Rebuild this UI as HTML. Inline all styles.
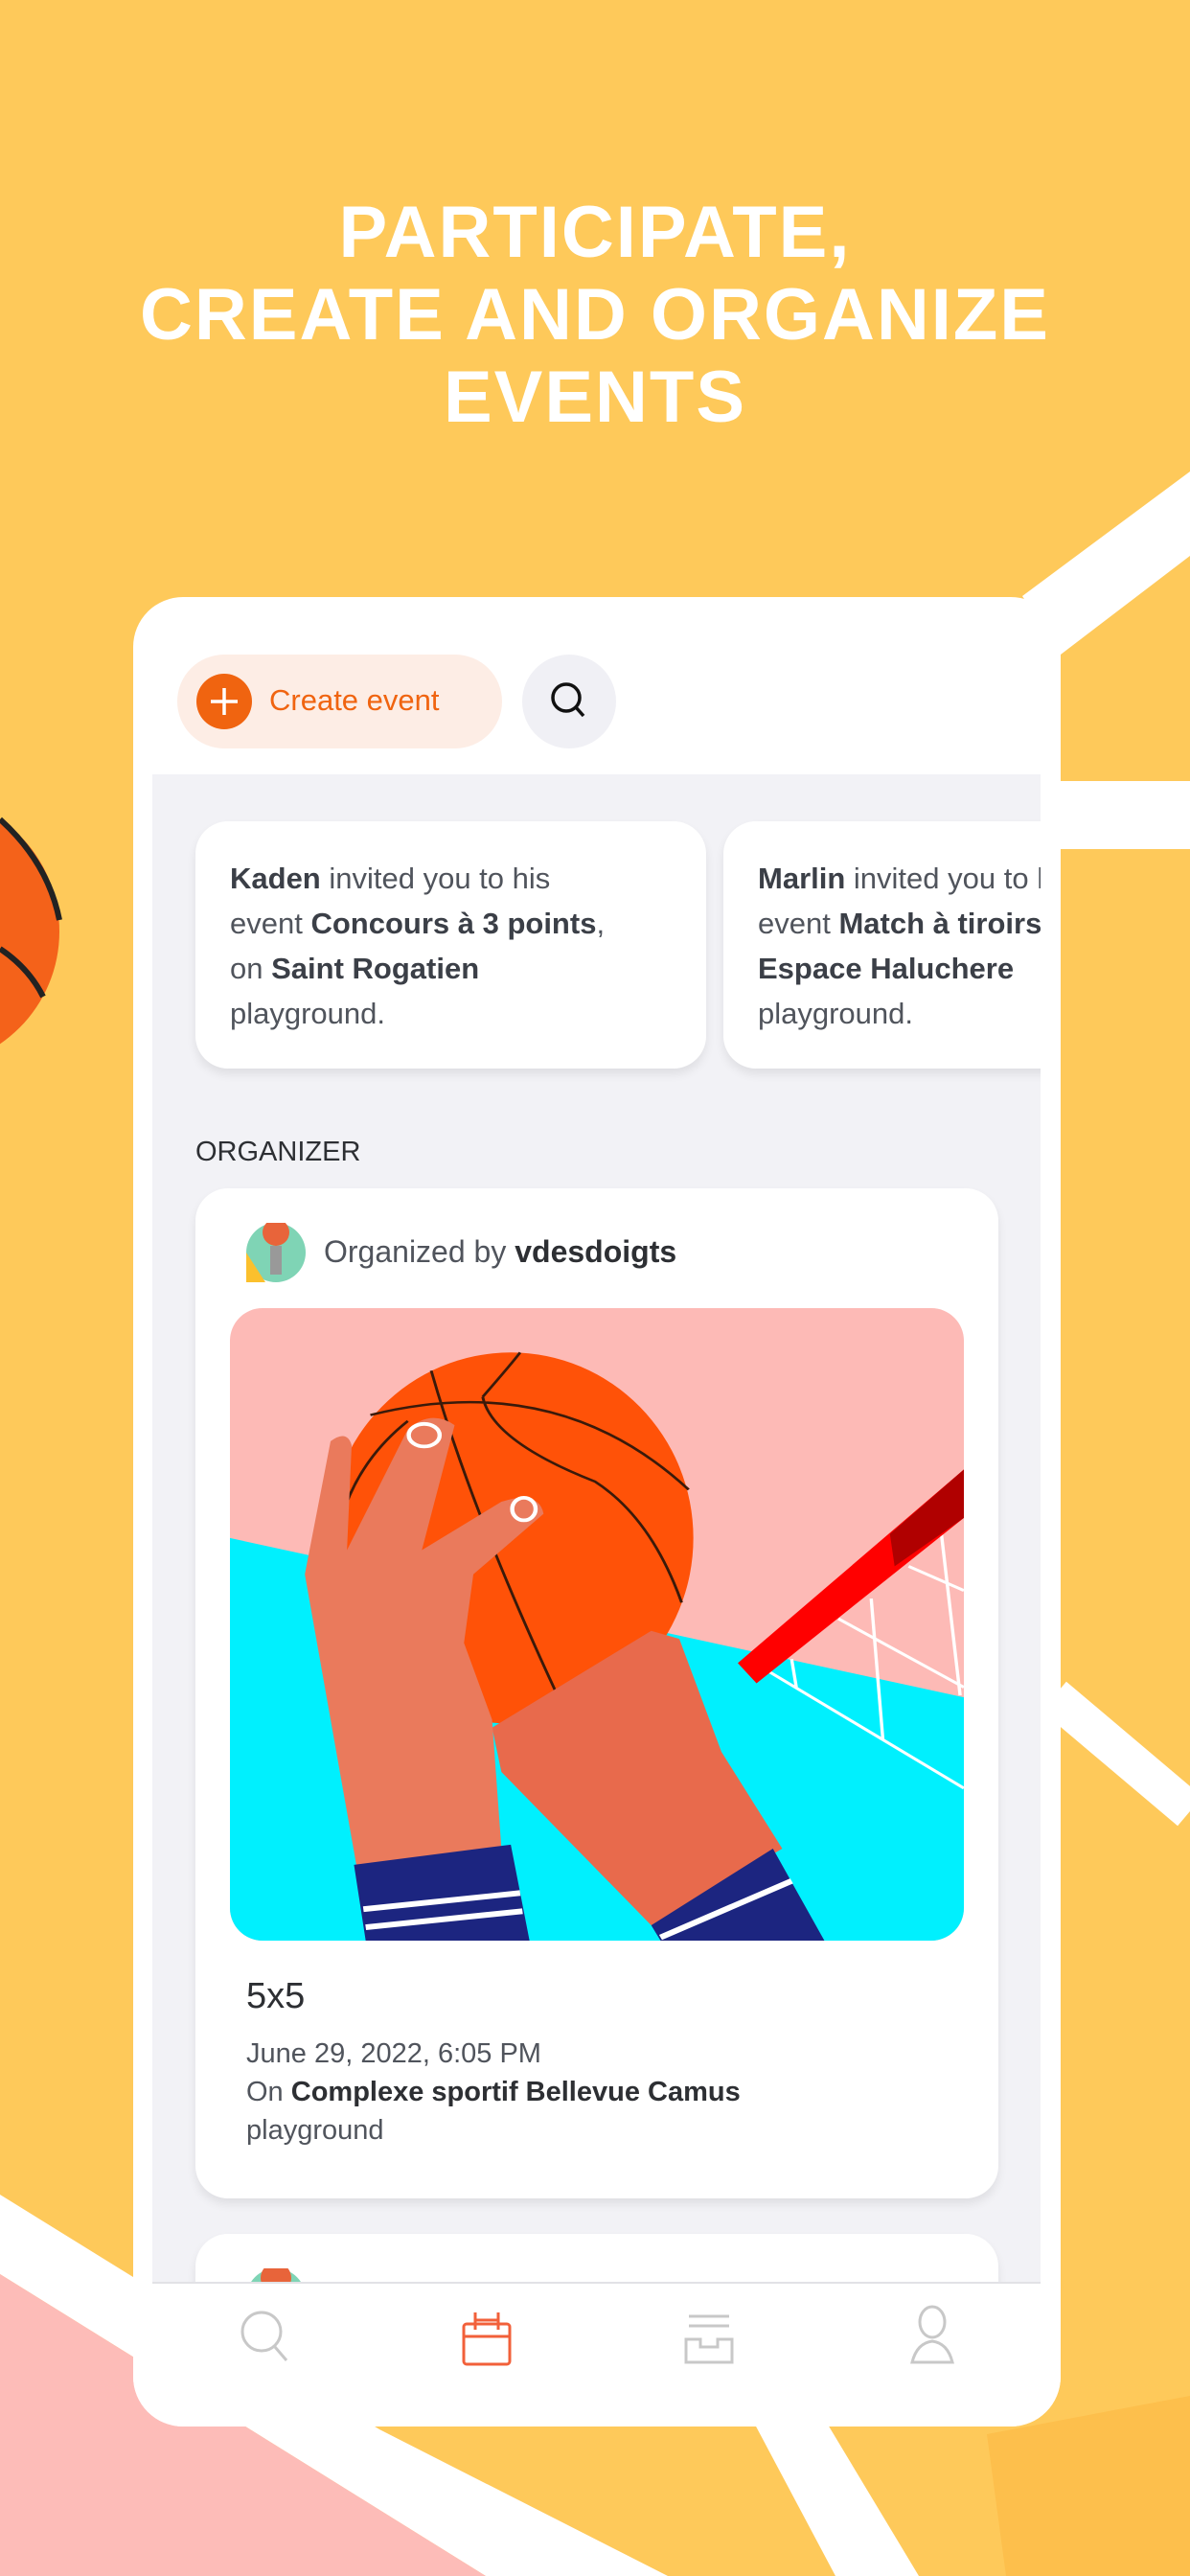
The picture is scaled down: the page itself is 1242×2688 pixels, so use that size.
<!DOCTYPE html>
<html><head><meta charset="utf-8">
<style>
*{margin:0;padding:0;box-sizing:border-box}
body{width:1242px;height:2688px;overflow:hidden;position:relative;background:#fec95a;font-family:"Liberation Sans",sans-serif}
.bg{position:absolute;left:0;top:0}
.title{position:absolute;left:0;top:200px;width:1242px;text-align:center;color:#fff;font-weight:bold;font-size:76px;line-height:86px;letter-spacing:2px}
.phone{position:absolute;left:139px;top:623px;width:968px;height:1909px;background:#fff;border-radius:52px;overflow:hidden}
.screen{position:absolute;left:20px;top:185px;width:927px;height:1573px;background:#f2f2f6;overflow:hidden}
.btn{position:absolute;left:46px;top:60px;width:339px;height:98px;border-radius:49px;background:#fdede5}
.plus{position:absolute;left:20px;top:20px;width:58px;height:58px;border-radius:50%;background:#f06410}
.btn span{position:absolute;left:96px;top:30px;font-size:31px;color:#f06410}
.sbtn{position:absolute;left:406px;top:60px;width:98px;height:98px;border-radius:50%;background:#f0f0f5}
.card{position:absolute;background:#fff;border-radius:34px;box-shadow:0 6px 10px rgba(0,0,0,.08)}
.inv{top:49px;width:533px;height:258px;padding:36px 36px;font-size:31px;line-height:47px;color:#50545c;white-space:nowrap;overflow:hidden}
.inv b{color:#3b3f47;font-weight:bold}
.org{position:absolute;left:45px;top:378px;font-size:29px;color:#2d2f33}
.ev{left:45px;top:432px;width:838px;height:1054px}
.ev2{left:45px;top:1523px;width:838px;height:200px}
.nav{position:absolute;left:20px;top:1758px;width:927px;height:2px;background:#e2e2e6}
</style></head><body>
<svg class="bg" width="1242" height="2688">
<path d="M1030 2540 L1242 2500 V2688 H1050Z" fill="#fdbf4c"/>
<path d="M1067 622 L1242 492 L1242 580 L1107 683Z" fill="#fff"/>
<rect x="1100" y="815" width="142" height="71" fill="#fff"/>
<path d="M1100 1770 L1242 1890" stroke="#fff" stroke-width="40"/>
<path d="M0 2290 L396 2535 L697 2688 L507 2688 L261 2535 L0 2373Z" fill="#fff"/>
<path d="M0 2373 L261 2535 L507 2688 L0 2688Z" fill="#fdbcb8"/>
<path d="M788 2530 L864 2530 L959 2688 L872 2688Z" fill="#fff"/>
<circle cx="-80" cy="972" r="142" fill="#f4621a"/>
<path d="M0 855 Q50 900 62 960 M0 990 Q30 1010 45 1040" stroke="#222" stroke-width="6" fill="none"/>
</svg>
<div class="title">PARTICIPATE,<br>CREATE AND ORGANIZE<br>EVENTS</div>
<div class="phone">
 <div class="btn"><div class="plus"><svg width="58" height="58"><path d="M29 15V43M15 29H43" stroke="#fff" stroke-width="3.5"/></svg></div><span>Create event</span></div>
 <div class="sbtn"><svg width="98" height="98"><circle cx="46" cy="45" r="14" stroke="#111" stroke-width="3.5" fill="none"/><path d="M56 55L64 64" stroke="#111" stroke-width="3.5"/></svg></div>
 <div class="screen">
  <div class="card inv" style="left:45px"><b>Kaden</b> invited you to his<br>event <b>Concours à 3 points</b>,<br>on <b>Saint Rogatien</b><br>playground.</div>
  <div class="card inv" style="left:596px"><b>Marlin</b> invited you to his<br>event <b>Match à tiroirs</b>, on<br><b>Espace Haluchere</b><br>playground.</div>
  <div class="org">ORGANIZER</div>
  <div class="card ev">
   <svg style="position:absolute;left:53px;top:36px" width="62" height="62"><circle cx="31" cy="31" r="31" fill="#7fd4b5"/><path d="M0 31 L20 62 L0 62Z" fill="#fbc02d"/><circle cx="31" cy="10" r="14" fill="#e8643a"/><rect x="25" y="24" width="12" height="30" fill="#999"/></svg>
   <div style="position:absolute;left:134px;top:48px;font-size:32px;color:#50545c">Organized by <b style="color:#2d2f33">vdesdoigts</b></div>
   <div style="position:absolute;left:36px;top:125px;width:766px;height:660px;border-radius:34px;overflow:hidden">
    <svg width="766" height="660" viewBox="0 0 1568 1568" preserveAspectRatio="none">
     <rect width="1568" height="1568" fill="#fdbab6"/>
     <path d="M0 570 L1568 965 V1568 H0Z" fill="#00f0fe"/>
     <ellipse cx="600" cy="570" rx="390" ry="460" fill="#ff5208"/>
     <path d="M430 155 Q520 520 720 1010 M540 220 Q600 140 620 110 M300 265 Q700 150 980 450 M540 220 Q560 330 780 430 Q900 520 965 730 M380 280 Q250 400 225 590" stroke="#3a1a0a" stroke-width="6" fill="none"/>
     <path d="M560 1040 L900 800 L960 820 L1050 1100 L1180 1340 L900 1530 L580 1150Z" fill="#e86a4c"/>
     <path d="M160 660 L215 330 Q250 300 260 340 L250 600 L380 300 Q430 250 480 290 L410 600 L580 480 Q660 450 670 510 L520 660 L500 830 L560 1020 L580 1340 L270 1380Z" fill="#ea7a5c"/>
     <ellipse cx="415" cy="315" rx="33" ry="28" fill="none" stroke="#fff" stroke-width="9"/>
     <ellipse cx="628" cy="498" rx="25" ry="28" fill="none" stroke="#fff" stroke-width="9"/>
     <path d="M265 1380 L600 1330 L640 1568 L290 1568Z M900 1530 L1160 1340 L1270 1568 L920 1568Z" fill="#1c2580"/>
     <path d="M285 1490 L620 1450 M290 1535 L625 1495 M920 1560 L1200 1420" stroke="#fff" stroke-width="14"/>
     <path d="M1150 900 L1568 1190 M1300 770 L1568 940 M1450 640 L1568 700 M1200 870 L1210 940 M1370 720 L1395 1070 M1520 560 L1560 960" stroke="#fff" stroke-width="7"/>
     <path d="M1085 880 L1568 400 V520 L1125 930Z" fill="#ff0000"/>
     <path d="M1410 560 L1568 400 V520 L1420 640Z" fill="#b00000"/>
    </svg>
   </div>
   <div style="position:absolute;left:53px;top:822px;font-size:38px;color:#2d2f33">5x5</div>
   <div style="position:absolute;left:53px;top:883px;font-size:29px;line-height:40px;color:#50545c">June 29, 2022, 6:05 PM<br>On <b style="color:#2d2f33">Complexe sportif Bellevue Camus</b><br>playground</div>
  </div>
  <div class="card ev2"><svg style="position:absolute;left:53px;top:36px" width="62" height="62"><circle cx="31" cy="31" r="31" fill="#7fd4b5"/><circle cx="31" cy="10" r="16" fill="#e8643a"/></svg></div>
 </div>
 <div class="nav"></div>
 <div style="position:absolute;left:0;top:1760px;width:968px;height:149px;background:#fff">
  <svg width="968" height="149">
   <g fill="none" stroke-width="3">
    <circle cx="134" cy="50" r="20" stroke="#c8c8c8"/><path d="M148 66 L160 80" stroke="#c8c8c8"/>
    <g stroke="#f2603a"><rect x="345" y="42" width="48" height="42" rx="3"/><path d="M345 55H393M357 30V48M381 30V48M357 38H381"/></g>
    <g stroke="#c8c8c8"><path d="M580 34H622M580 44H622"/><path d="M577 58H592V66H610V58H625V82H577Z"/></g>
    <g stroke="#c8c8c8"><ellipse cx="834" cy="40" rx="13" ry="16"/><path d="M813 82 Q818 62 834 60 Q850 62 855 82Z"/></g>
   </g>
  </svg>
 </div>
</div>
</body></html>
